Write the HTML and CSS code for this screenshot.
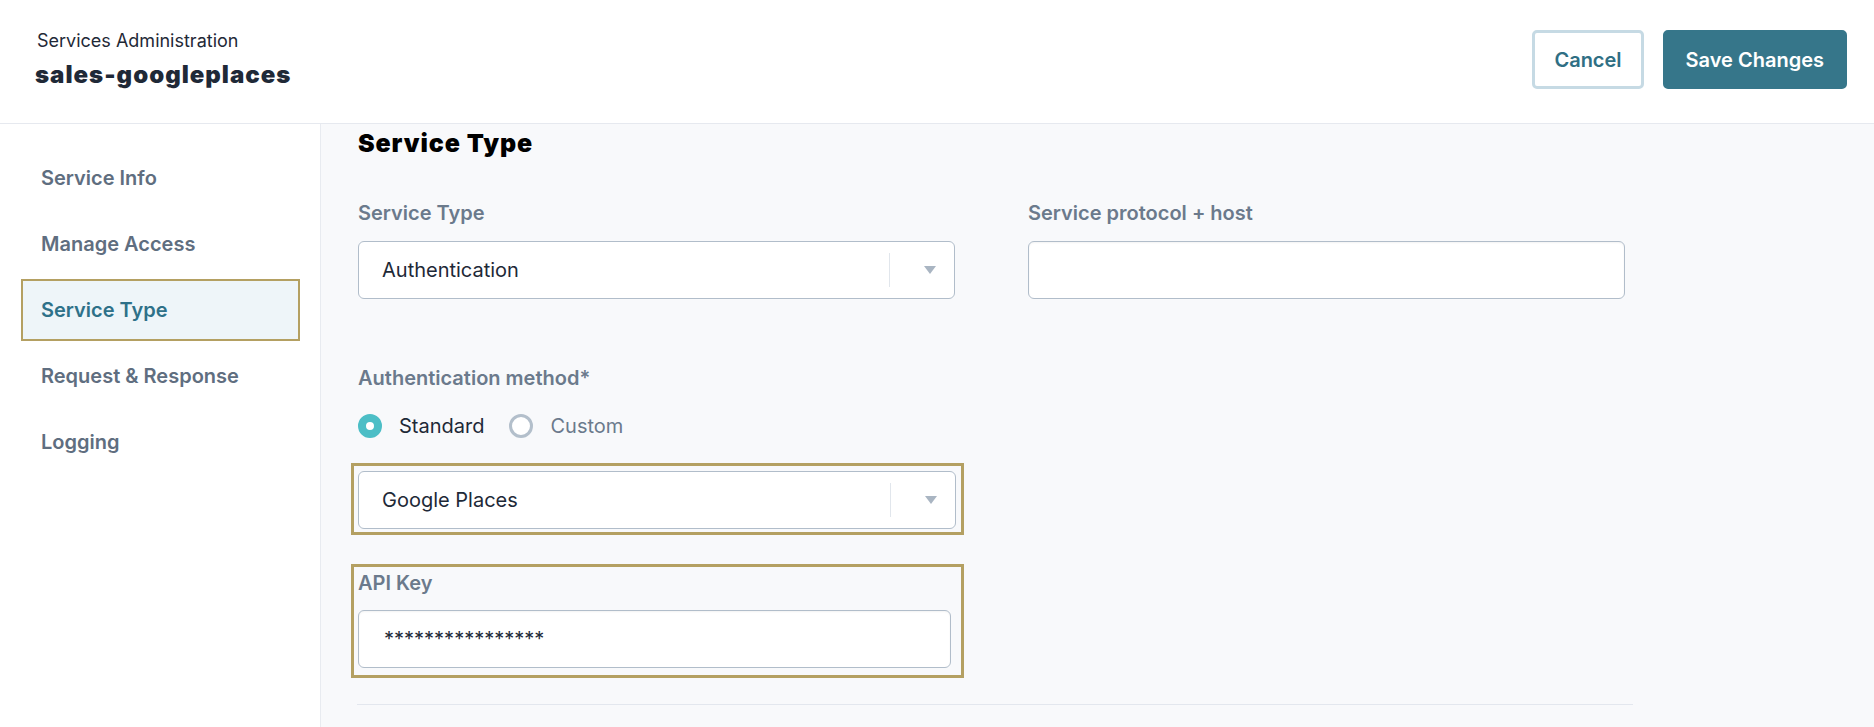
FILE: index.html
```html
<!DOCTYPE html>
<html>
<head>
	<title>sales-googleplaces - Services Administration</title>
	<link rel="stylesheet" href="styles.css">
</head>
<body>
	<header class="topbar">
		<div class="title-block">
			<div class="crumb">Services Administration</div>
			<h1 class="page-title">sales-googleplaces</h1>
		</div>
		<div class="actions">
			<button class="btn btn-outline" type="button">Cancel</button>
			<button class="btn btn-primary" type="button">Save Changes</button>
		</div>
	</header>
	<div class="layout">
		<nav class="sidebar">
			<a class="nav-item" href="#">Service Info</a>
			<a class="nav-item" href="#">Manage Access</a>
			<a class="nav-item active" href="#">Service Type</a>
			<a class="nav-item" href="#">Request &amp; Response</a>
			<a class="nav-item" href="#">Logging</a>
		</nav>
		<main class="content">
			<h2 class="section-title">Service Type</h2>

			<div class="form-row">
				<div class="field">
					<label class="field-label">Service Type</label>
					<div class="select">
						<span class="select-value">Authentication</span>
						<span class="select-sep"></span>
						<span class="select-arrow">
							<svg width="12" height="8" viewBox="0 0 12 8"><path d="M0 0h12L6 8z" fill="#a9b5c2"/></svg>
						</span>
					</div>
				</div>
				<div class="field">
					<label class="field-label">Service protocol + host</label>
					<input class="text-input" type="text" value="">
				</div>
			</div>

			<div class="field auth-method">
				<label class="field-label">Authentication method*</label>
				<div class="radio-group">
					<label class="radio checked"><span class="radio-dot"></span>Standard</label>
					<label class="radio"><span class="radio-dot"></span>Custom</label>
				</div>
			</div>

			<div class="highlight first">
				<div class="select">
					<span class="select-value">Google Places</span>
					<span class="select-sep"></span>
					<span class="select-arrow">
						<svg width="12" height="8" viewBox="0 0 12 8"><path d="M0 0h12L6 8z" fill="#a9b5c2"/></svg>
					</span>
				</div>
			</div>

			<div class="highlight second">
				<label class="field-label">API Key</label>
				<input class="text-input api-key" type="text" value="****************">
			</div>

			<div class="divider"></div>
		</main>
	</div>
</body>
</html>
```

FILE: styles.css
```css
body {
	margin: 0;
	padding: 0;
	font-family: Inter, 'Noto Sans', sans-serif;
	color: #1e2937;
	background: #f8f9fb;
}

/* top bar */
.topbar {
	height: 124px;
	box-sizing: border-box;
	display: flex;
	align-items: center;
	justify-content: space-between;
	padding: 0 27px 4px 35px;
	background: #fff;
	border-bottom: 1px solid #e6e9ef;
}
.crumb {
	font-size: 18px;
	line-height: 22px;
	color: #1f2937;
	padding-left: 2px;
}
.page-title {
	margin: 8px 0 0;
	font-size: 24px;
	line-height: 30px;
	font-weight: 900;
	letter-spacing: 1px;
	color: #1f2937;
}
.actions {
	display: flex;
	gap: 19px;
}
.btn {
	height: 59px;
	border-radius: 5px;
	border: 3px solid;
	padding: 0 19px;
	font-family: Inter, sans-serif;
	font-size: 20px;
	font-weight: 600;
	cursor: pointer;
}
.btn-outline {
	background: #fff;
	border-color: #c6dae4;
	color: #2f6f84;
}
.btn-primary {
	background: #36768a;
	border-color: #36768a;
	color: #fff;
	padding: 0 20px;
}

/* page body */
.layout {
	display: flex;
	height: 603px;
}
.sidebar {
	width: 321px;
	box-sizing: border-box;
	background: #fff;
	border-right: 1px solid #e8ebf0;
	padding: 23px 0 0 21px;
	display: flex;
	flex-direction: column;
	gap: 4px;
}
.nav-item {
	width: 279px;
	height: 62px;
	box-sizing: border-box;
	display: flex;
	align-items: center;
	padding-left: 18px;
	border: 2px solid transparent;
	font-size: 20px;
	font-weight: 600;
	color: #5f6e80;
	text-decoration: none;
}
.nav-item.active {
	border-color: #b4a062;
	background: #eef5f9;
	color: #2e7189;
}

.content {
	flex: 1;
	padding: 4px 0 0 37px;
}
.section-title {
	margin: 0;
	font-size: 25px;
	line-height: 30px;
	font-weight: 900;
	letter-spacing: 0.9px;
	color: #000;
}
.form-row {
	display: grid;
	grid-template-columns: 597px 597px;
	column-gap: 73px;
	margin-top: 43px;
}
.field-label {
	display: block;
	font-size: 20px;
	line-height: 24px;
	font-weight: 600;
	color: #6b7a8c;
	margin-bottom: 16px;
}
.select,
.text-input {
	height: 58px;
	box-sizing: border-box;
	background: #fff;
	border: 1px solid #b1bdca;
	border-radius: 6px;
	font-family: Inter, sans-serif;
	font-size: 20px;
	color: #1e2937;
}
.select {
	display: flex;
	align-items: center;
	padding-left: 23px;
}
.select-value {
	flex: 1;
}
.select-sep {
	width: 1px;
	height: 34px;
	background: #e1e6ec;
}
.select-arrow {
	display: flex;
	padding: 0 18px 0 34px;
}
.text-input {
	width: 100%;
	padding: 0 23px;
	outline: none;
	box-shadow: inset 0 1px 2px rgba(0, 0, 0, 0.05);
}

.auth-method {
	margin-top: 67px;
}
.auth-method .field-label {
	margin-bottom: 24px;
}
.radio-group {
	display: flex;
	align-items: center;
	height: 24px;
}
.radio {
	display: flex;
	align-items: center;
	gap: 17px;
	font-size: 20px;
	color: #6b7a8c;
	margin-right: 25px;
}
.radio.checked {
	color: #1e2937;
}
.radio-dot {
	width: 24px;
	height: 24px;
	box-sizing: border-box;
	border-radius: 50%;
	border: 3px solid #b3bfcb;
	background: #fff;
}
.radio.checked .radio-dot {
	border: 8px solid #4cbec6;
}

/* highlighted blocks */
.highlight {
	width: 613px;
	box-sizing: border-box;
	margin-left: -7px;
	border: 3px solid #b4a062;
}
.highlight.first {
	margin-top: 25px;
	padding: 5px 5px 3px 4px;
}
.highlight.second {
	margin-top: 29px;
	padding: 4px 10px 7px 4px;
}
.highlight.second .field-label {
	margin-bottom: 15px;
}
.api-key {
	width: 593px;
	padding-left: 25px;
}

.divider {
	width: 1276px;
	height: 1px;
	margin: 26px 0 0 -1px;
	background: #e3e7ee;
}
```
